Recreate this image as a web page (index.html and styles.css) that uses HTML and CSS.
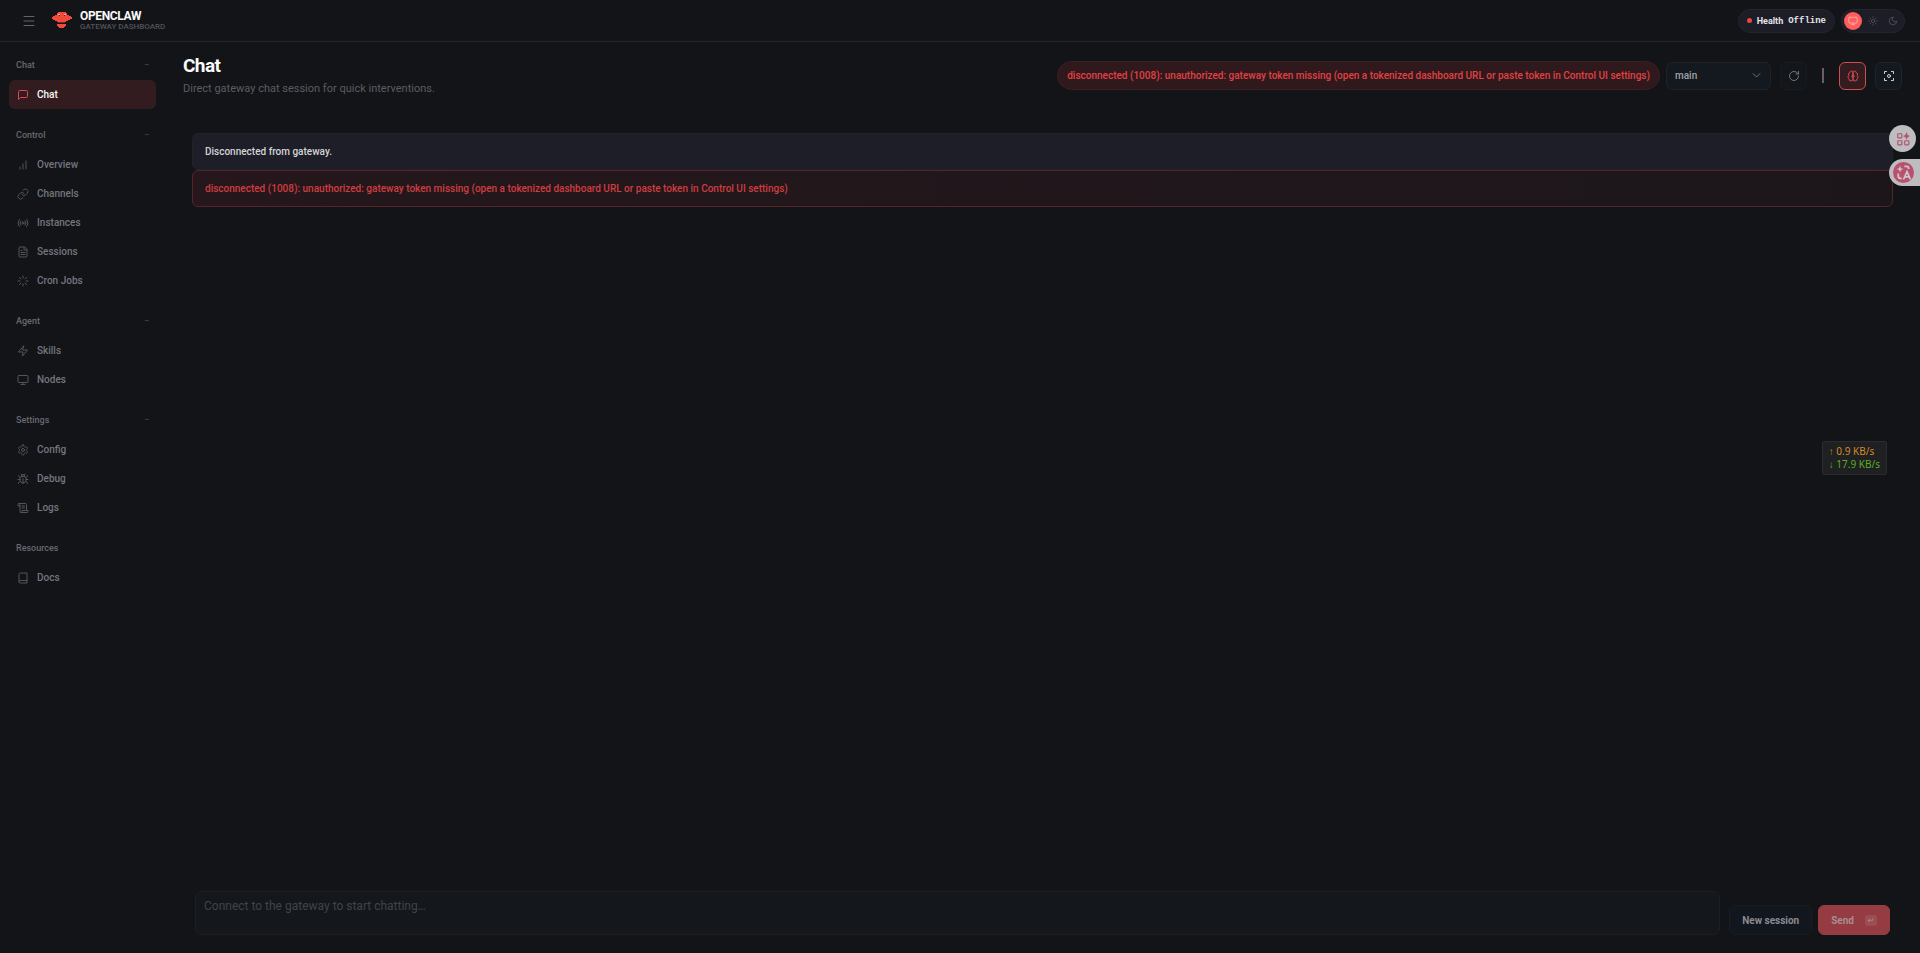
FILE: index.html
```html
<!DOCTYPE html>
<html lang="en">
<head>
  <meta charset="UTF-8"/>
  <meta name="viewport" content="width=device-width, initial-scale=1.0"/>
  <title>OpenClaw Control</title>
  <link rel="stylesheet" href="styles.css">
</head>
<body>

  <!-- Topbar -->
  <header class="topbar">
    <div class="topbar-left">
      <button class="menu-btn" type="button" aria-label="Collapse sidebar">
        <svg class="icon" viewBox="0 0 24 24"><path d="M2 3h20M2 12h20M2 21h20"/></svg>
      </button>
      <div class="brand">
        <svg class="logo" viewBox="0 0 20 17" aria-hidden="true">
          <path fill="#ef4a3c" d="M5 1h1V0h8v1h1v2h2v1h2v1h1v2h-2v1h-2v1h-2v1H5V9H3V8H1V7H0V5h1V4h2V3h2zM5 12h9v2h-1v1h-1v1H7v-1H6v-1H5z"/>
          <path fill="#7a2521" d="M6 10h7v1H6z"/>
          <path fill="#fbb4a8" d="M6 2h2v1H6zM12 2h2v1h-2z"/>
          <path fill="#5a1f1e" d="M7 3h1v1H7zM12 3h1v1h-1z"/>
        </svg>
        <div class="brand-text">
          <div class="brand-title">OPENCLAW</div>
          <div class="brand-sub">GATEWAY DASHBOARD</div>
        </div>
      </div>
    </div>
    <div class="topbar-right">
      <div class="health">
        <span class="dot"></span>
        <span>Health</span>
        <span class="mono">Offline</span>
      </div>
      <div class="theme-toggle">
        <button class="theme-btn active" type="button" aria-label="System theme">
          <svg class="icon" viewBox="0 0 24 24"><rect x="2" y="3" width="20" height="14" rx="2"/><path d="M8 21h8M12 17v4"/></svg>
        </button>
        <button class="theme-btn" type="button" aria-label="Light theme">
          <svg class="icon" viewBox="0 0 24 24"><circle cx="12" cy="12" r="4"/><path d="M12 2v2M12 20v2M4.9 4.9l1.4 1.4M17.7 17.7l1.4 1.4M2 12h2M20 12h2M6.3 17.7l-1.4 1.4M19.1 4.9l-1.4 1.4"/></svg>
        </button>
        <button class="theme-btn" type="button" aria-label="Dark theme">
          <svg class="icon" viewBox="0 0 24 24"><path d="M12 3a6 6 0 0 0 9 9 9 9 0 1 1-9-9z"/></svg>
        </button>
      </div>
    </div>
  </header>

  <div class="shell">

    <!-- Sidebar -->
    <nav class="sidebar">
      <div class="nav-group">
        <button class="nav-label" type="button"><span>Chat</span><span class="sign">−</span></button>
        <a class="nav-item active" href="#chat">
          <svg class="icon" viewBox="0 0 24 24"><path d="M21 15a2 2 0 0 1-2 2H7l-4 4V5a2 2 0 0 1 2-2h14a2 2 0 0 1 2 2z"/></svg>
          Chat
        </a>
      </div>
      <div class="nav-group">
        <button class="nav-label" type="button"><span>Control</span><span class="sign">−</span></button>
        <a class="nav-item" href="#overview">
          <svg class="icon" viewBox="0 0 24 24"><path d="M12 20V10M18 20V4M6 20v-4"/></svg>
          Overview
        </a>
        <a class="nav-item" href="#channels">
          <svg class="icon" viewBox="0 0 24 24"><path d="M10 13a5 5 0 0 0 7.54.54l3-3a5 5 0 0 0-7.07-7.07l-1.72 1.71"/><path d="M14 11a5 5 0 0 0-7.54-.54l-3 3a5 5 0 0 0 7.07 7.07l1.71-1.71"/></svg>
          Channels
        </a>
        <a class="nav-item" href="#instances">
          <svg class="icon" viewBox="0 0 24 24"><circle cx="12" cy="12" r="2"/><path d="M16.24 7.76a6 6 0 0 1 0 8.49M7.76 16.24a6 6 0 0 1 0-8.48M19.07 4.93a10 10 0 0 1 0 14.14M4.93 19.07a10 10 0 0 1 0-14.14"/></svg>
          Instances
        </a>
        <a class="nav-item" href="#sessions">
          <svg class="icon" viewBox="0 0 24 24"><path d="M14.5 2H6a2 2 0 0 0-2 2v16a2 2 0 0 0 2 2h12a2 2 0 0 0 2-2V7.5z"/><path d="M14 2v6h6M16 13H8M16 17H8M10 9H8"/></svg>
          Sessions
        </a>
        <a class="nav-item" href="#cron">
          <svg class="icon" viewBox="0 0 24 24"><path d="M12 2v4M12 18v4M4.93 4.93l2.83 2.83M16.24 16.24l2.83 2.83M2 12h4M18 12h4M4.93 19.07l2.83-2.83M16.24 7.76l2.83-2.83"/></svg>
          Cron Jobs
        </a>
      </div>
      <div class="nav-group">
        <button class="nav-label" type="button"><span>Agent</span><span class="sign">−</span></button>
        <a class="nav-item" href="#skills">
          <svg class="icon" viewBox="0 0 24 24"><path d="M13 2L3 14h9l-1 8 10-12h-9z"/></svg>
          Skills
        </a>
        <a class="nav-item" href="#nodes">
          <svg class="icon" viewBox="0 0 24 24"><rect x="2" y="3" width="20" height="14" rx="2"/><path d="M8 21h8M12 17v4"/></svg>
          Nodes
        </a>
      </div>
      <div class="nav-group">
        <button class="nav-label" type="button"><span>Settings</span><span class="sign">−</span></button>
        <a class="nav-item" href="#config">
          <svg class="icon" viewBox="0 0 24 24"><path d="M12.22 2h-.44a2 2 0 0 0-2 2v.18a2 2 0 0 1-1 1.73l-.43.25a2 2 0 0 1-2 0l-.15-.08a2 2 0 0 0-2.73.73l-.22.38a2 2 0 0 0 .73 2.73l.15.1a2 2 0 0 1 1 1.72v.51a2 2 0 0 1-1 1.74l-.15.09a2 2 0 0 0-.73 2.73l.22.38a2 2 0 0 0 2.73.73l.15-.08a2 2 0 0 1 2 0l.43.25a2 2 0 0 1 1 1.73V20a2 2 0 0 0 2 2h.44a2 2 0 0 0 2-2v-.18a2 2 0 0 1 1-1.73l.43-.25a2 2 0 0 1 2 0l.15.08a2 2 0 0 0 2.73-.73l.22-.39a2 2 0 0 0-.73-2.73l-.15-.08a2 2 0 0 1-1-1.74v-.5a2 2 0 0 1 1-1.74l.15-.09a2 2 0 0 0 .73-2.73l-.22-.38a2 2 0 0 0-2.73-.73l-.15.08a2 2 0 0 1-2 0l-.43-.25a2 2 0 0 1-1-1.73V4a2 2 0 0 0-2-2z"/><circle cx="12" cy="12" r="3"/></svg>
          Config
        </a>
        <a class="nav-item" href="#debug">
          <svg class="icon" viewBox="0 0 24 24"><path d="M8 2l1.88 1.88M14.12 3.88L16 2M9 7.13v-1a3 3 0 1 1 6 0v1"/><path d="M12 20c-3.3 0-6-2.7-6-6v-3a4 4 0 0 1 4-4h4a4 4 0 0 1 4 4v3c0 3.3-2.7 6-6 6M12 20v-9M6.53 9C4.6 8.8 3 7.1 3 5M6 13H2M3 21c0-2.1 1.7-3.9 3.8-4M20.97 5c0 2.1-1.6 3.8-3.5 4M22 13h-4M17.2 17c2.1.1 3.8 1.9 3.8 4"/></svg>
          Debug
        </a>
        <a class="nav-item" href="#logs">
          <svg class="icon" viewBox="0 0 24 24"><path d="M8 21h12a2 2 0 0 0 2-2v-2H10v2a2 2 0 1 1-4 0V5a2 2 0 1 0-4 0v3h4"/><path d="M19 17V5a2 2 0 0 0-2-2H4M15 8h-5M15 12h-5"/></svg>
          Logs
        </a>
      </div>
      <div class="nav-group">
        <div class="nav-label"><span>Resources</span></div>
        <a class="nav-item" href="#docs">
          <svg class="icon" viewBox="0 0 24 24"><path d="M4 19.5v-15A2.5 2.5 0 0 1 6.5 2H20v20H6.5a2.5 2.5 0 0 1 0-5H20"/></svg>
          Docs
        </a>
      </div>
    </nav>

    <!-- Main Content -->
    <main class="content">
      <div class="page-header">
        <div>
          <h1>Chat</h1>
          <p class="page-sub">Direct gateway chat session for quick interventions.</p>
        </div>
        <div class="controls">
          <div class="error-pill">disconnected (1008): unauthorized: gateway token missing (open a tokenized dashboard URL or paste token in Control UI settings)</div>
          <div class="select-wrap">
            <select aria-label="Session">
              <option>main</option>
            </select>
            <svg class="icon chevron" viewBox="0 0 24 24"><path d="M3 7l9 9 9-9"/></svg>
          </div>
          <button class="icon-btn dim" type="button" aria-label="Refresh">
            <svg class="icon" viewBox="0 0 24 24"><path d="M21 12a9 9 0 1 1-9-9c2.52 0 4.93 1 6.74 2.74L21 8"/><path d="M21 3v5h-5"/></svg>
          </button>
          <span class="separator"></span>
          <button class="icon-btn active" type="button" aria-label="Show thinking">
            <svg class="icon" viewBox="0 0 24 24"><path d="M12 5a3 3 0 1 0-5.997.125 4 4 0 0 0-2.526 5.77 4 4 0 0 0 .556 6.588A4 4 0 1 0 12 18z"/><path d="M12 5a3 3 0 1 1 5.997.125 4 4 0 0 1 2.526 5.77 4 4 0 0 1-.556 6.588A4 4 0 1 1 12 18z"/><path d="M15 13a4.5 4.5 0 0 1-3-4 4.5 4.5 0 0 1-3 4"/></svg>
          </button>
          <button class="icon-btn" type="button" aria-label="Focus mode">
            <svg class="icon" viewBox="0 0 24 24"><path d="M3 7V3h4M17 3h4v4M21 17v4h-4M7 21H3v-4"/><circle cx="12" cy="12" r="3"/></svg>
          </button>
        </div>
      </div>

      <section class="chat">
        <div class="callout">Disconnected from gateway.</div>
        <div class="callout danger">disconnected (1008): unauthorized: gateway token missing (open a tokenized dashboard URL or paste token in Control UI settings)</div>
        <div class="thread"></div>
        <form class="compose">
          <textarea aria-label="Message" placeholder="Connect to the gateway to start chatting…" disabled></textarea>
          <button class="btn" type="button" disabled>New session</button>
          <button class="btn primary" type="submit" disabled>Send <kbd>↵</kbd></button>
        </form>
      </section>
    </main>
  </div>

  <!-- Floating widgets -->
  <div class="float-tools">
    <button class="float-btn" type="button" aria-label="Apps">
      <svg viewBox="0 0 24 24"><g fill="none" stroke="#b8506f" stroke-width="2"><rect x="3" y="3" width="7" height="7" rx="1"/><rect x="3" y="15" width="7" height="7" rx="1"/><rect x="15" y="15" width="7" height="7" rx="1"/></g><path fill="#b8506f" d="M18 0l2 5 4 2-4 2-2 4-2-4-4-2 4-2z"/></svg>
    </button>
    <button class="float-btn tab" type="button" aria-label="Translate">
      <svg viewBox="0 0 24 24"><circle cx="12" cy="12" r="12" fill="#b8506f"/><path fill="#d0c6ca" d="M8 4l1 3 3 1-3 1-1 3-1-3-3-1 3-1z"/><path fill="none" stroke="#d0c6ca" stroke-width="2" d="M13 5h3q2 0 2 3M6 13v3q0 3 4 3M12 20l4-9 4 9M13 17h6"/></svg>
    </button>
  </div>
  <div class="net-speed">
    <div class="up">↑ 0.9 KB/s</div>
    <div class="down">↓ 17.9 KB/s</div>
  </div>

</body>
</html>
```
FILE: styles.css
```css
* {
  margin: 0;
  padding: 0;
  box-sizing: border-box;
}

body {
  min-height: 100vh;
  display: flex;
  flex-direction: column;
  background: #121417;
  color: #e4e4e7;
  font-family: Roboto, sans-serif;
  font-size: 10px;
}

button, select, textarea {
  font: inherit;
  color: inherit;
  border: none;
  background: none;
}

a {
  text-decoration: none;
}

.icon {
  width: 12px;
  height: 12px;
  fill: none;
  stroke: currentColor;
  stroke-width: 2;
  stroke-linecap: round;
  stroke-linejoin: round;
  flex: none;
}

/* Topbar */
.topbar {
  height: 42px;
  display: flex;
  align-items: center;
  justify-content: space-between;
  padding: 0 15px;
  border-bottom: 1px solid #25272c;
}

.topbar-left,
.topbar-right,
.brand {
  display: flex;
  align-items: center;
}

.topbar-left {
  gap: 10px;
}

.topbar-right {
  gap: 6px;
}

.menu-btn {
  width: 27px;
  height: 27px;
  display: flex;
  align-items: center;
  justify-content: center;
  color: #62636b;
}

.brand {
  gap: 8px;
}

.logo {
  width: 20px;
  height: 17px;
}

.brand-title {
  font-size: 12px;
  line-height: 12px;
  font-weight: 700;
  letter-spacing: -0.03em;
  color: #fafafa;
}

.brand-sub {
  font-size: 8px;
  line-height: 10px;
  font-weight: 500;
  color: #52535b;
}

.health {
  height: 24px;
  display: flex;
  align-items: center;
  gap: 5px;
  padding: 0 8px;
  border: 1px solid #24252c;
  border-radius: 12px;
  background: #1c1d27;
  font-size: 9px;
  font-weight: 700;
}

.health .mono {
  font-family: "Liberation Mono", monospace;
}

.dot {
  width: 5px;
  height: 5px;
  border-radius: 50%;
  background: #ef4444;
}

.theme-toggle {
  height: 24px;
  display: flex;
  align-items: center;
  gap: 2px;
  padding: 2px;
  border: 1px solid #24252c;
  border-radius: 12px;
  background: #1c1d27;
}

.theme-btn {
  width: 18px;
  height: 18px;
  display: flex;
  align-items: center;
  justify-content: center;
  border-radius: 50%;
  color: #52535b;
}

.theme-btn .icon {
  width: 10px;
  height: 10px;
}

.theme-btn.active {
  background: #ff5c5c;
  color: #ffb4ae;
}

/* Sidebar */
.shell {
  flex: 1;
  display: flex;
}

.sidebar {
  width: 165px;
  padding: 12px 9px;
  display: flex;
  flex-direction: column;
  gap: 15px;
}

.nav-group {
  display: flex;
  flex-direction: column;
}

.nav-label {
  height: 22px;
  margin-bottom: 4px;
  padding: 0 7px;
  display: flex;
  align-items: center;
  justify-content: space-between;
  font-size: 9px;
  font-weight: 500;
  color: #686972;
}

.sign {
  color: #43444b;
}

.nav-item {
  height: 29px;
  padding: 0 8px;
  display: flex;
  align-items: center;
  gap: 8px;
  border-radius: 6px;
  font-size: 10px;
  font-weight: 500;
  color: #74757e;
}

.nav-item .icon {
  color: #53545c;
}

.nav-item.active {
  background: #331c20;
  color: #fafafa;
}

.nav-item.active .icon {
  color: #d94c4e;
}

/* Main Content */
.content {
  flex: 1;
  min-width: 0;
  display: flex;
  flex-direction: column;
  padding: 12px 18px 18px;
}

.page-header {
  display: flex;
  justify-content: space-between;
  margin-bottom: 36px;
}

h1 {
  font-size: 19px;
  line-height: 23px;
  font-weight: 700;
  letter-spacing: -0.03em;
  color: #fafafa;
}

.page-sub {
  margin-top: 4px;
  font-size: 11px;
  line-height: 16px;
  color: #5b5c65;
}

.controls {
  display: flex;
  align-items: center;
  align-self: center;
  gap: 9px;
}

.error-pill {
  height: 29px;
  display: flex;
  align-items: center;
  margin-right: -3px;
  padding: 0 9px;
  border: 1px solid #3c1f23;
  border-radius: 15px;
  background: #2f191d;
  font-weight: 500;
  color: #e14144;
}

.select-wrap {
  display: grid;
  align-items: center;
}

.select-wrap select {
  grid-area: 1 / 1;
  width: 105px;
  height: 28px;
  padding: 0 8px;
  appearance: none;
  border: 1px solid #1f2228;
  border-radius: 6px;
  background: #141920;
  font-weight: 500;
  color: #a1a1aa;
}

.chevron {
  grid-area: 1 / 1;
  justify-self: end;
  width: 9px;
  height: 9px;
  margin-right: 10px;
  color: #8b8c94;
  pointer-events: none;
}

.icon-btn {
  width: 27px;
  height: 28px;
  display: flex;
  align-items: center;
  justify-content: center;
  border: 1px solid #1f232a;
  border-radius: 6px;
  background: #141920;
  color: #d4d4d8;
}

.icon-btn.dim {
  border-color: #181b20;
  background: #13171b;
  color: #74757c;
}

.icon-btn.active {
  border-color: #cf4e50;
  background: #331c20;
  color: #d94c4e;
}

.separator {
  width: 2px;
  height: 15px;
  margin: 0 6px;
  background: #6b5d60;
}

/* Chat */
.chat {
  flex: 1;
  display: flex;
  flex-direction: column;
  padding: 0 9px;
}

.callout {
  padding: 10px 12px;
  border: 1px solid #20222a;
  border-radius: 6px;
  background: #1d1e28;
  line-height: 15px;
  font-weight: 500;
  color: #d4d4d8;
}

.callout.danger {
  border-color: #54242a;
  background: linear-gradient(90deg, #25171b, #1c161b);
  color: #cf3d40;
}

.thread {
  flex: 1;
}

.compose {
  display: flex;
  align-items: flex-end;
  padding: 0 3px;
  gap: 6px;
}

.compose textarea {
  flex: 1;
  height: 44px;
  margin-right: 3px;
  padding: 7px 8px;
  border: 1px solid #1b1e22;
  border-radius: 6px;
  background: #14181d;
  font-size: 12px;
  line-height: 15px;
  resize: none;
}

.compose textarea::placeholder {
  color: #414349;
}

.btn {
  height: 30px;
  display: flex;
  align-items: center;
  gap: 11px;
  padding: 0 12px;
  border: 1px solid #191c23;
  border-radius: 6px;
  background: #12161f;
  font-weight: 700;
  color: #8a8b91;
}

.btn.primary {
  border-color: #943c41;
  background: #943c41;
  color: #a98d92;
}

.btn kbd {
  width: 12px;
  height: 11px;
  border-radius: 3px;
  background: #9c4d53;
  font: 8px/11px "DejaVu Sans", sans-serif;
  text-align: center;
}

/* Floating widgets */
.float-tools {
  position: fixed;
  top: 125px;
  right: 0;
  display: flex;
  flex-direction: column;
  align-items: flex-end;
  gap: 7px;
}

.float-btn {
  width: 27px;
  height: 27px;
  margin-right: 4px;
  display: flex;
  align-items: center;
  justify-content: center;
  border-radius: 50%;
  background: #bdbdbf;
}

.float-btn svg {
  width: 14px;
  height: 14px;
}

.float-btn.tab {
  width: 31px;
  margin-right: 0;
  padding-left: 4px;
  justify-content: flex-start;
  border-radius: 14px 0 0 14px;
}

.float-btn.tab svg {
  width: 21px;
  height: 21px;
}

.net-speed {
  position: fixed;
  top: 441px;
  right: 33px;
  padding: 3px 6px;
  border: 1px solid #2b2c2f;
  border-radius: 2px;
  background: #1f2022;
  font-family: "Noto Sans", sans-serif;
  font-size: 10px;
  line-height: 13px;
}

.up {
  color: #d58a26;
}

.down {
  color: #5bae22;
}
```
